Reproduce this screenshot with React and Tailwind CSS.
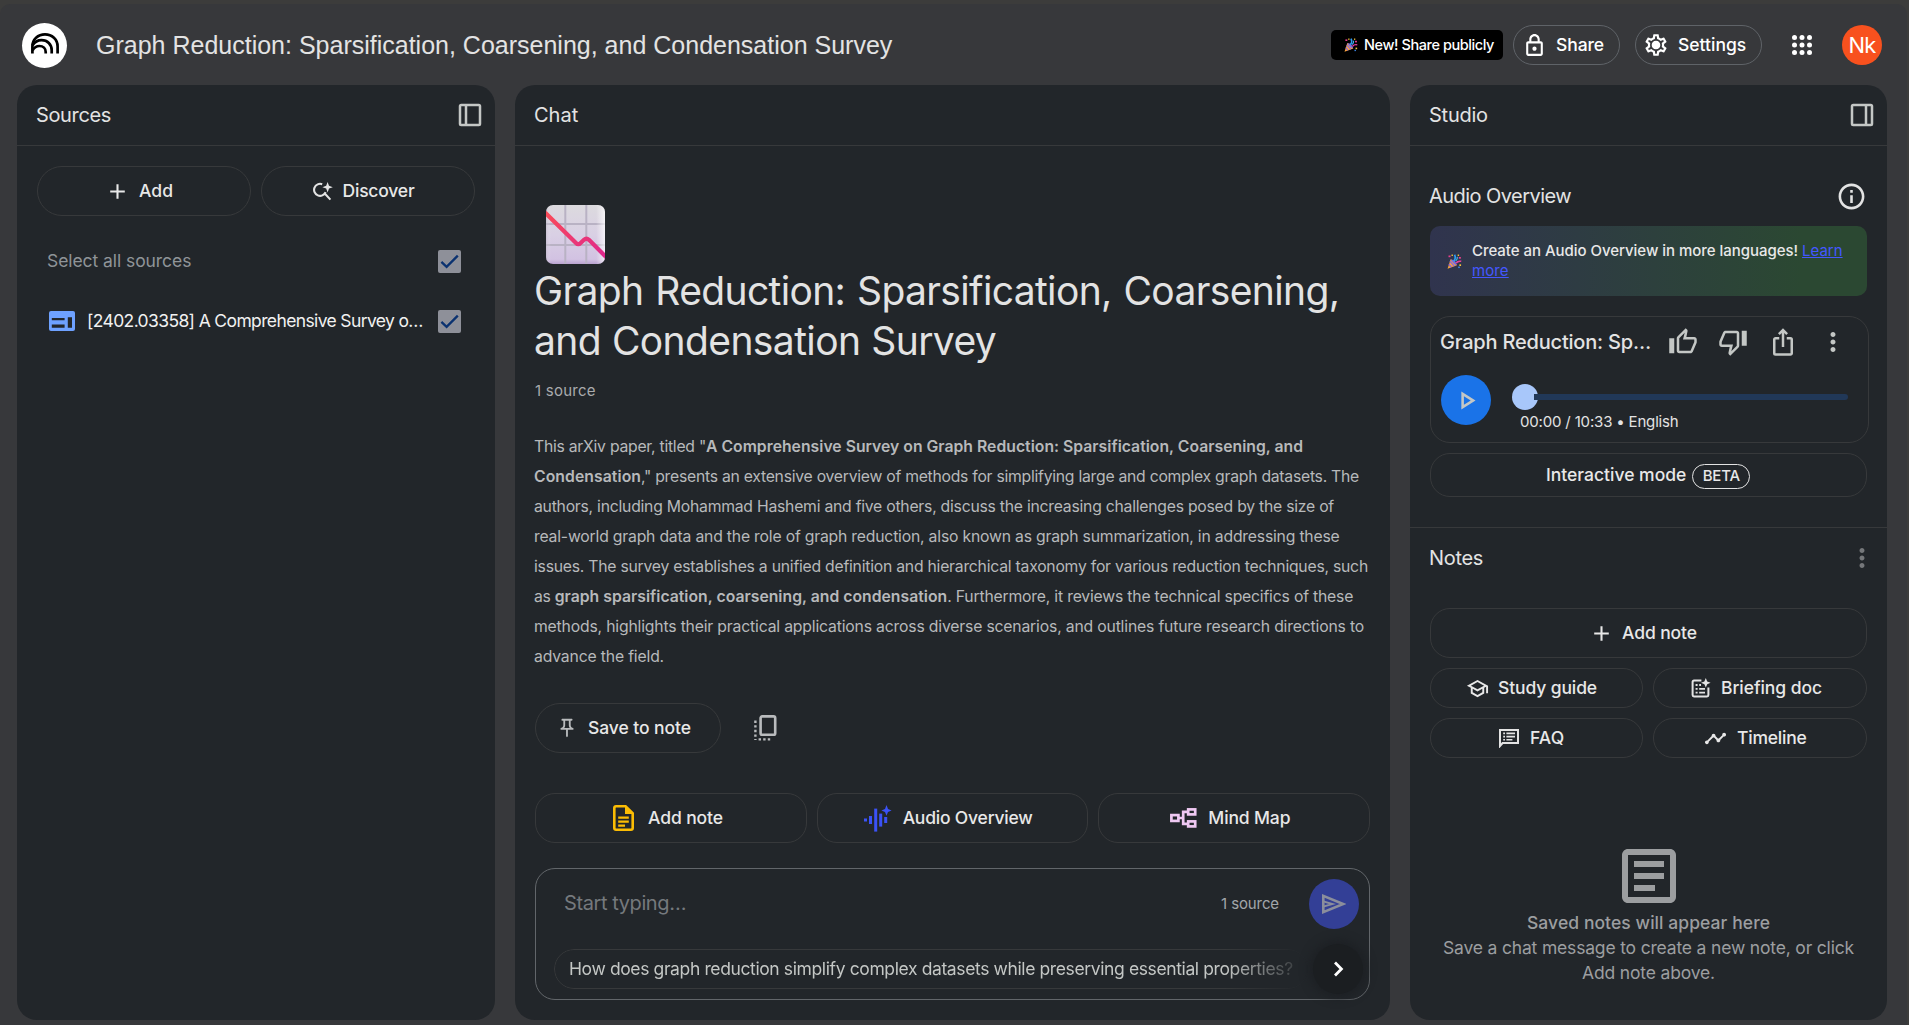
import {
  MdOutlineLock, MdOutlineSettings, MdOutlineInfo, MdOutlineThumbUp, MdOutlineThumbDown,
  MdIosShare, MdMoreVert, MdOutlinePlayArrow, MdOutlineSchool, MdTimeline, MdOutlineArticle,
  MdOutlinePushPin, MdAdd,
} from "react-icons/md";

function T({ className = "", children }) {
  return <span className={"inline-block shrink-0 whitespace-pre " + className}>{children}</span>;
}

const Logo = () => (
  <div className="flex size-[45px] shrink-0 items-center justify-center rounded-full bg-white">
    <svg className="-mt-1 h-[21px] w-7" viewBox="0 0 28 21" fill="none" stroke="#000" strokeWidth="2.7">
      <path d="M1.4 20.6V13.4C1.4 6.4 7 1.4 14 1.4S26.6 6.4 26.6 13.4V20.6" />
      <path d="M1.6 12.4C3.6 9 7 7.1 10.6 7.1C16.4 7.1 20.7 11.4 20.7 17.2V20.6" />
      <path d="M1.6 17.4C3.2 14.6 5.6 13 8.4 13C12.2 13 14.7 15.8 14.7 19V20.6" />
    </svg>
  </div>
);

const Dock = ({ right }) => (
  <svg className={right ? "size-[30px] -scale-x-100" : "size-[30px]"} viewBox="0 0 24 24" fill="none" stroke="#c4c7c5" strokeWidth="2">
    <rect x="4" y="4" width="16" height="16" rx="1" />
    <path d="M8.8 4v16" />
  </svg>
);

const Gear = () => (
  <svg className="size-[26px]" viewBox="0 0 26 26">
    <MdOutlineSettings size={26} />
    <circle cx="13" cy="13" r="3.8" fill="currentColor" />
  </svg>
);

const AppsGrid = () => (
  <svg className="size-5 text-white" viewBox="0 0 20 20" fill="currentColor">
    {[2.5, 10, 17.5].map((y) => [2.5, 10, 17.5].map((x) => <circle key={x + "-" + y} cx={x} cy={y} r="2.5" />))}
  </svg>
);

const Popper = ({ className }) => (
  <svg className={className} viewBox="0 0 16 16" fill="none">
    <path d="M.6 15.6L3.8 5.6Q8 6.6 10.6 12Z" fill="#f9a23b" />
    <path d="M2 11L4.6 14.2M3.2 7.8L7.8 13" stroke="#8d6bd8" strokeWidth="1.5" />
    <path d="M3.8 5.6Q9.6 6.4 10.6 12Q6 10.6 3.8 5.6Z" fill="#7a6be0" />
    <path d="M7.2 7.6Q10 4.4 8 .8" stroke="#2f9cf0" strokeWidth="1.8" />
    <path d="M9.8 9.6Q11.6 7 15.2 7.8" stroke="#e83fa0" strokeWidth="1.6" />
    <path d="M9.2 7.6Q11.4 5.6 11 3" stroke="#39b6f0" strokeWidth="1.3" />
    <g fill="#e83f8c"><rect x="1.6" y="1.6" width="2.2" height="1.8" /><rect x="12.6" y="3.2" width="2.2" height="1.8" /></g>
    <g fill="#f7c53b"><rect x="4.8" y=".6" width="1.5" height="1.5" /><rect x="13.2" y="11" width="1.8" height="1.8" /><rect x="11.4" y=".6" width="1.5" height="1.5" /></g>
    <g fill="#3f8cf0"><rect x="12" y="13.4" width="1.6" height="1.6" /></g>
  </svg>
);

const SearchSpark = () => (
  <svg className="h-[19px] w-5" viewBox="0 0 20 19" fill="none">
    <path d="M9.2 2.2A6 6 0 1 0 12.6 10.2M12 11.8L17.4 17.6" stroke="#e3e3e3" strokeWidth="2.1" />
    <path d="M14.6 0L16 3.8L19.8 5.2L16 6.6L14.6 10.4L13.2 6.6L9.4 5.2L13.2 3.8Z" fill="#e3e3e3" />
  </svg>
);

const WebIcon = () => (
  <svg className="h-5 w-[26px] shrink-0" viewBox="0 0 26 20">
    <rect width="26" height="20" rx="2" fill="#6ea1ff" />
    <path d="M2.8 7H15.6V9.2H2.8ZM2.8 13.4H15.6V16.8H2.8ZM18.8 6.2H23V16.8H18.8Z" fill="#22262a" />
  </svg>
);

const Check = () => (
  <svg className="size-[23px] rounded-[2px] bg-[#8e9099]" viewBox="0 0 23 23" fill="none">
    <path d="M3.4 11.8L8.6 16.8L19.8 5.6" stroke="#0b3270" strokeWidth="2.3" />
  </svg>
);

const ChartEmoji = () => (
  <svg className="ml-[11px] size-[59px]" viewBox="0 0 59 59">
    <defs>
      <linearGradient id="paper" x1="0" y1="0" x2="0" y2="1"><stop offset="0" stopColor="#dcdade" /><stop offset=".5" stopColor="#d9d0e4" /><stop offset=".92" stopColor="#d2c2e2" /><stop offset="1" stopColor="#b9a2cf" /></linearGradient>
      <linearGradient id="shine" x1="0" y1="0" x2="1" y2="0"><stop offset="0" stopColor="#b9b3c2" stopOpacity=".5" /><stop offset=".08" stopColor="#fff" stopOpacity="0" /><stop offset=".85" stopColor="#fff" stopOpacity="0" /><stop offset="1" stopColor="#fff" stopOpacity=".7" /></linearGradient>
      <linearGradient id="fall" x1="0" y1="0" x2="1" y2="1"><stop offset="0" stopColor="#fb4d56" /><stop offset="1" stopColor="#dd2590" /></linearGradient>
      <clipPath id="round"><rect width="59" height="59" rx="7" /></clipPath>
    </defs>
    <g clipPath="url(#round)">
      <rect width="59" height="59" fill="url(#paper)" />
      <path d="M19.3 0V59M40.3 0V59M0 19H59M0 40H59" stroke="#b9b2c4" strokeWidth="2" />
      <rect width="59" height="59" fill="url(#shine)" />
      <path d="M-2 6.5L30 38Q32.3 40.4 34.6 38L38 34.8Q40.4 32.6 43 34.8L62 54" fill="none" stroke="url(#fall)" strokeWidth="4.2" />
    </g>
  </svg>
);

const CopyAll = () => (
  <svg className="h-[26px] w-[23px]" viewBox="0 0 23 26" fill="none" stroke="#b9bbbd">
    <rect x="6.6" y="1.4" width="14.6" height="18.4" rx="1.6" strokeWidth="2.6" />
    <path d="M1.4 5.6V25" strokeWidth="2.4" strokeDasharray="2.4 2.2" />
    <path d="M3.4 24.4H17" strokeWidth="2.4" strokeDasharray="2.4 2.2" strokeDashoffset="-1.2" />
  </svg>
);

const DocYellow = () => (
  <svg className="h-[26px] w-[21px]" viewBox="0 0 21 26" fill="none">
    <path d="M3 1.3H12.6L19.7 8.4V23Q19.7 24.7 18 24.7H3Q1.3 24.7 1.3 23V3Q1.3 1.3 3 1.3Z" stroke="#fbbc04" strokeWidth="2.6" />
    <path d="M12 1V9H20Z" fill="#fbbc04" />
    <path d="M5.2 12.6H15.8M5.2 16.6H15.8M5.2 20.6H12" stroke="#fbbc04" strokeWidth="2.2" />
  </svg>
);

const AudioSpark = () => (
  <svg className="h-[27px] w-7" viewBox="0 0 28 27" fill="#3b52f6">
    <rect x="0" y="13.5" width="3" height="3" /><rect x="5" y="11" width="3" height="8" /><rect x="10.2" y="3.6" width="3" height="23" />
    <rect x="15.2" y="8.6" width="3" height="13" /><rect x="20.2" y="12" width="3" height="6" />
    <path d="M22.5 0L24 3.9L27.6 5.4L24 6.9L22.5 10.8L21 6.9L17.4 5.4L21 3.9Z" />
  </svg>
);

const MindMap = () => (
  <svg className="h-5 w-[27px]" viewBox="0 0 27 20" fill="none" stroke="#efc8f2" strokeWidth="2.7">
    <rect x="1.4" y="7.1" width="7" height="5.8" /><rect x="18.2" y="1.4" width="7" height="5" /><rect x="18.2" y="13.4" width="7" height="5" />
    <path d="M8.3 10H13.2M18.2 3.9H13.2V15.9H18.2" />
  </svg>
);

const Briefing = () => (
  <svg className="size-5" viewBox="0 0 20 20" fill="none" stroke="#e3e3e3" strokeWidth="2">
    <path d="M10.4 2.6H3Q1.6 2.6 1.6 4V17Q1.6 18.4 3 18.4H16Q17.4 18.4 17.4 17V9.6" />
    <path d="M4.6 7H6.6M4.6 10.8H6.6M4.6 14.6H6.6M8.2 10.8H14M8.2 14.6H14M8.2 7H10" strokeWidth="1.8" />
    <path d="M14.8 0L16.2 3.4L19.6 4.8L16.2 6.2L14.8 9.6L13.4 6.2L10 4.8L13.4 3.4Z" fill="#e3e3e3" stroke="none" />
  </svg>
);

const Faq = () => (
  <svg className="size-5" viewBox="0 0 20 20" fill="none" stroke="#e3e3e3" strokeWidth="2">
    <path d="M1 18V2H19V15H3.6Z" />
    <path d="M4.2 5.4H6M4.2 8.6H6M4.2 11.8H6M7.4 5.4H16M7.4 8.6H16M7.4 11.8H13.4" strokeWidth="1.6" />
  </svg>
);

const Send = () => (
  <svg className="h-5 w-6" viewBox="0 0 24 20" fill="none" stroke="#8b8e9c" strokeWidth="2.6">
    <path d="M1.3 1.9V18.1L21.2 10Z" /><path d="M1.3 7.4L10.4 10L1.3 12.6" strokeWidth="2" />
  </svg>
);

const pill = "flex items-center border border-[#37393b] text-[17.5px] font-medium text-[#e8e8e8] ";

function PanelHead({ children, icon }) {
  return (
    <div className="flex h-[61px] shrink-0 items-center justify-between border-b border-[#37393b] pr-[10px] pl-[19px] text-[20px] text-[#e3e3e3]">
      {children}{icon}
    </div>
  );
}

export default function App() {
  return (
    <div className="flex h-[1025px] w-[1909px] flex-col overflow-hidden bg-[#3c3c3b] pt-1 font-['Inter',sans-serif]">
      <div className="mr-[2px] flex min-h-0 flex-1 flex-col rounded-t-[10px] bg-[#37383b]">
        <header className="flex h-[81px] shrink-0 items-center pt-px pr-[25px] pl-[22px]">
          <Logo />
          <T className="mt-px ml-[29px] font-['Liberation_Sans'] text-[25px] text-[#e3e3e3]">Graph Reduction: Sparsification, Coarsening, and Condensation Survey</T>
          <div className="ml-auto flex items-center">
            <div className="flex h-[30px] w-[172px] items-center rounded-[5px] bg-black pl-[13px] text-[14.5px] font-medium text-white">
              <Popper className="mr-[6px] size-[14px]" />
              <T className="tracking-[-0.42px]">New! Share publicly</T>
            </div>
            <div className="ml-[10px] flex h-10 w-[107px] items-center rounded-full border border-[#5f6368] pl-[8px] text-[17.5px] font-medium text-white">
              <MdOutlineLock className="mr-[9px] size-[25px]" /><T className="mt-px tracking-[-0.1px]">Share</T>
            </div>
            <div className="ml-[15px] flex h-10 w-[127px] items-center rounded-full border border-[#5f6368] pl-[7px] text-[17.5px] font-medium text-white">
              <span className="mr-[9px]"><Gear /></span><T className="mt-px">Settings</T>
            </div>
            <span className="ml-[30px]"><AppsGrid /></span>
            <div className="ml-[30px] flex size-10 items-center justify-center rounded-full bg-[#f8511e] text-[22px] text-white"><T className="tracking-[-0.83px]">Nk</T></div>
          </div>
        </header>
        <div className="flex min-h-0 flex-1 pr-[20px] pb-[5px] pl-[17px]">
          <section className="mr-5 flex w-[478px] flex-col rounded-[20px] bg-[#22262a]">
            <PanelHead icon={<Dock />}><T className="tracking-[-0.36px]">Sources</T></PanelHead>
            <div className="flex gap-[10px] px-5 pt-5">
              <div className={pill + "h-[50px] w-[214px] justify-center rounded-full pr-[10px]"}><MdAdd className="mr-[9px] size-[25px]" /><T>Add</T></div>
              <div className={pill + "h-[50px] w-[214px] justify-center rounded-full pr-[9px]"}><span className="mr-[10px]"><SearchSpark /></span><T className="tracking-[-0.2px]">Discover</T></div>
            </div>
            <div className="mt-[30px] flex h-[30px] items-center justify-between pr-[34px] pl-[30px] text-[17.5px] text-[#8f9498]"><T className="tracking-[-0.07px]">Select all sources</T><Check /></div>
            <div className="mt-[30px] flex h-[30px] items-center pr-[34px] pl-8 text-[17.5px] text-[#f1f1f1]"><WebIcon /><T className="ml-[12px] tracking-[-0.63px]">[2402.03358] A Comprehensive Survey o…</T><span className="ml-auto"><Check /></span></div>
          </section>

          <section className="mr-5 flex w-[875px] flex-col rounded-[20px] bg-[#22262a]">
            <PanelHead><T>Chat</T></PanelHead>
            <div className="flex flex-1 flex-col px-5 pt-[59px]">
              <ChartEmoji />
              <h1 className="mt-[2px] -ml-px flex flex-col text-[39px] leading-[50px] text-[#e3e3e3]">
                <T className="self-start tracking-[-0.64px] [word-spacing:1.5px]">Graph Reduction: Sparsification, Coarsening,</T>
                <T className="self-start tracking-[-0.6px] [word-spacing:0.5px]">and Condensation Survey</T>
              </h1>
              <div className="mt-[15px] h-5 text-[15px] leading-5 text-[#a9abad]"><T className="tracking-[0.25px]">1 source</T></div>
              <div className="mt-[31px] -ml-px text-[15.75px] leading-[30px] text-[#b7b9bb]">
                <div className="flex"><T className="tracking-[-0.252px]">{'This arXiv paper, titled "'}</T><T className="font-semibold tracking-[0.011px]">A Comprehensive Survey on Graph Reduction: Sparsification, Coarsening, and</T></div>
                <div className="flex"><T className="font-semibold tracking-[0.065px]">Condensation</T><T className="tracking-[-0.26px]">," presents an extensive overview of methods for simplifying large and complex graph datasets. The</T></div>
                <div className="flex"><T className="tracking-[-0.242px]">authors, including Mohammad Hashemi and five others, discuss the increasing challenges posed by the size of</T></div>
                <div className="flex"><T className="tracking-[-0.201px]">real-world graph data and the role of graph reduction, also known as graph summarization, in addressing these</T></div>
                <div className="flex"><T className="tracking-[-0.237px]">issues. The survey establishes a unified definition and hierarchical taxonomy for various reduction techniques, such</T></div>
                <div className="flex"><T className="tracking-[-0.298px]">as </T><T className="font-semibold tracking-[0.014px]">graph sparsification, coarsening, and condensation</T><T className="tracking-[-0.196px]">. Furthermore, it reviews the technical specifics of these</T></div>
                <div className="flex"><T className="tracking-[-0.181px]">methods, highlights their practical applications across diverse scenarios, and outlines future research directions to</T></div>
                <div className="flex"><T className="tracking-[-0.167px]">advance the field.</T></div>
              </div>
              <div className="mt-[31px] flex items-center">
                <div className={pill + "h-[50px] w-[186px] rounded-full pl-[20px]"}><MdOutlinePushPin className="mr-[10px] size-[22px] text-[#b9bbbd]" /><T className="tracking-[-0.07px]">Save to note</T></div>
                <span className="ml-[33px]"><CopyAll /></span>
              </div>
              <div className="mt-10 grid grid-cols-3 gap-[10px]">
                <div className={pill + "h-[50px] rounded-[20px] pl-[77px]"}><DocYellow /><T className="ml-[14px] tracking-[-0.1px]">Add note</T></div>
                <div className={pill + "h-[50px] rounded-[20px] pl-[46px]"}><AudioSpark /><T className="ml-[11px] tracking-[-0.2px]">Audio Overview</T></div>
                <div className={pill + "h-[50px] rounded-[20px] pl-[71px]"}><MindMap /><T className="ml-[11px] tracking-[-0.14px]">Mind Map</T></div>
              </div>
              <div className="mt-[25px] flex h-[132px] flex-col rounded-[20px] border border-[#62666a]">
                <div className="mt-[10px] flex h-[50px] items-center pr-[10px] pl-7">
                  <T className="-mt-[2px] text-[20px] tracking-[-0.411px] text-[#75797d]">Start typing…</T>
                  <T className="mr-[30px] ml-auto text-[15px] tracking-[-0.104px] text-[#a2a6aa]">1 source</T>
                  <div className="flex size-[50px] items-center justify-center rounded-full bg-[#333f96]"><Send /></div>
                </div>
                <div className="mt-[15px] flex h-[50px] items-center pr-[6px] pl-[18px]">
                  <div className="flex h-10 w-[754px] items-center rounded-[20px] border border-[#37393b] pl-[14px] text-[17.5px] text-[#c4c7c5] [mask-image:linear-gradient(to_right,black_89%,transparent_100%)]">
                    <T className="tracking-[-0.382px]">How does graph reduction simplify complex datasets while preserving essential properties?</T>
                  </div>
                  <div className="ml-auto flex size-[50px] items-center justify-center rounded-full bg-[#1b1e21] shadow-[0_0_10px_4px_#1d2024]">
                    <svg className="h-4 w-[11px]" viewBox="0 0 11 16" fill="none"><path d="M2 1.6L8.4 8L2 14.4" stroke="#fff" strokeWidth="2.8" /></svg>
                  </div>
                </div>
              </div>
            </div>
          </section>

          <section className="flex w-[477px] flex-col rounded-[20px] bg-[#22262a]">
            <PanelHead icon={<Dock right />}><T className="tracking-[-0.25px]">Studio</T></PanelHead>
            <div className="flex flex-1 flex-col pt-[30px]">
              <div className="flex h-10 items-center justify-between pr-5 pl-5 text-[20px] text-[#e3e3e3]"><T className="-ml-px tracking-[-0.55px]">Audio Overview</T><MdOutlineInfo className="size-[31px]" /></div>
              <div className="mx-5 mt-[10px] flex h-[70px] items-center rounded-[10px] bg-[linear-gradient(to_right,#30344e,#2b4832_85%)] pl-[17px] text-[15px] leading-5 font-medium text-[#e8e8e8]">
                <Popper className="mr-[10px] size-[15px]" />
                <div className="flex flex-col">
                  <div className="flex gap-[4px]"><T className="tracking-[-0.036px]">Create an Audio Overview in more languages!</T><T className="font-normal text-[#4457ff] underline">Learn</T></div>
                  <T className="self-start font-normal tracking-[0.1px] text-[#4457ff] underline">more</T>
                </div>
              </div>
              <div className="mt-5 mr-[18px] ml-5 h-[127px] rounded-[20px] border border-[#37393b]">
                <div className="mt-[10px] flex h-[30px] items-center pl-[9px] text-[20px] font-medium text-[#e3e3e3]">
                  <T className="tracking-[-0.195px]">Graph Reduction: Sp…</T>
                  <div className="ml-[17px] flex items-center gap-[20px] text-[#c4c7c5]"><MdOutlineThumbUp className="size-[30px]" /><MdOutlineThumbDown className="size-[30px]" /><MdIosShare className="size-[30px]" /><MdMoreVert className="size-[30px]" /></div>
                </div>
                <div className="mt-[18px] flex items-start pl-[10px]">
                  <div className="flex size-[50px] items-center justify-center rounded-full bg-[#1a73e8]"><MdOutlinePlayArrow className="size-[31px] text-[#c4c7c5]" /></div>
                  <div className="ml-[21px] flex flex-col">
                    <div className="mt-[9px] flex h-[26px] w-[336px] items-center"><div className="size-[26px] rounded-full bg-[#a8c7fa]" /><div className="-ml-1 h-[6px] flex-1 rounded-r-full bg-[#213858]" /></div>
                    <T className="mt-[2px] ml-[8px] self-start text-[15px] leading-5 tracking-[-0.17px] text-[#e3e3e3]">00:00 / 10:33 • English</T>
                  </div>
                </div>
              </div>
              <div className={pill + "mx-5 mt-[10px] h-[44px] shrink-0 rounded-[20px] pl-[115px]"}>
                <T>Interactive mode</T>
                <span className="mt-[3px] ml-[6px] flex h-[25px] w-[58px] items-center justify-center rounded-full border border-[#e3e3e3] text-[15px]"><T className="tracking-[-0.2px]">BETA</T></span>
              </div>
              <div className="mt-[30px] h-px bg-[#37393b]" />
              <div className="mt-[15px] flex h-[30px] items-center justify-between pr-[10px] pl-[19px] text-[20px] text-[#e3e3e3]"><T className="tracking-[-0.33px]">Notes</T><MdMoreVert className="size-[30px] text-[#75777a]" /></div>
              <div className={pill + "mx-5 mt-[35px] h-[50px] rounded-[20px] pl-[158px]"}><MdAdd className="mr-[8px] size-[25px]" /><T className="tracking-[-0.1px]">Add note</T></div>
              <div className="mx-5 mt-[10px] grid grid-cols-[213px_214px] gap-[10px]">
                <div className={pill + "h-10 rounded-[20px] pl-[35px]"}><MdOutlineSchool className="mr-[9px] size-[23px]" /><T className="tracking-[-0.12px]">Study guide</T></div>
                <div className={pill + "h-10 rounded-[20px] pl-[37px]"}><Briefing /><T className="ml-[10px] tracking-[-0.07px]">Briefing doc</T></div>
                <div className={pill + "h-10 rounded-[20px] pl-[68px]"}><Faq /><T className="ml-[11px] tracking-[0.1px]">FAQ</T></div>
                <div className={pill + "h-10 rounded-[20px] pl-[50px]"}><MdTimeline className="mr-[10px] size-[23px]" /><T className="tracking-[-0.22px]">Timeline</T></div>
              </div>
              <div className="mt-[82px] flex flex-col items-center text-[17.5px] leading-[25px] text-[#9c9ea0]">
                <MdOutlineArticle className="size-[72px]" />
                <T className="-mt-[2px] font-medium tracking-[0.07px]">Saved notes will appear here</T>
                <T className="tracking-[-0.173px]">Save a chat message to create a new note, or click</T>
                <T className="tracking-[-0.158px]">Add note above.</T>
              </div>
            </div>
          </section>
        </div>
      </div>
    </div>
  );
}
